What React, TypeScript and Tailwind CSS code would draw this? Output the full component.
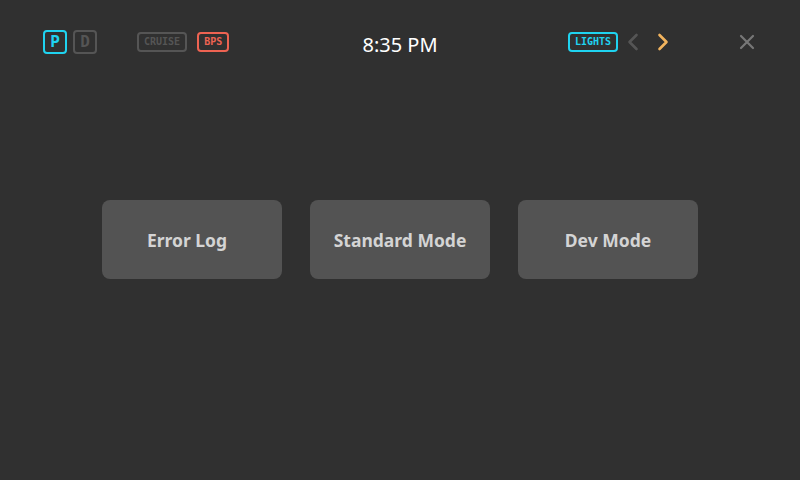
import React from 'react';

const Chevron = ({ dir, color }: { dir: 'left' | 'right'; color: string }) => (
  <svg width="12" height="20" viewBox="0 0 12 20" fill="none">
    <path
      d={dir === 'left' ? 'M9.5 3 L2.5 10 L9.5 17' : 'M2.5 3 L9.5 10 L2.5 17'}
      stroke={color}
      strokeWidth="2.6"
      strokeLinecap="round"
      strokeLinejoin="round"
    />
  </svg>
);

const Tag = ({ label, className }: { label: string; className: string }) => (
  <div
    className={`h-5 px-[5px] flex items-center rounded-[4px] border-2 text-[10px] font-bold font-['DejaVu_Sans_Mono',monospace] leading-none ${className}`}
  >
    {label}
  </div>
);

export default function App() {
  const buttons = [
    { label: 'Error Log', pad: 'pr-[10px]' },
    { label: 'Standard Mode', pad: '' },
    { label: 'Dev Mode', pad: '' },
  ];

  return (
    <div className="w-[800px] h-[480px] bg-[#303030] flex flex-col font-['Noto_Sans',sans-serif] overflow-hidden">
      <div className="relative h-[84px] flex items-center px-[43px]">
        <div className="flex items-center gap-[6px]">
          <div className="w-6 h-6 rounded-[4px] border-2 border-[#1fd3f0] text-[#1fd3f0] flex items-center justify-center text-[16px] font-bold font-['DejaVu_Sans_Mono',monospace]">
            P
          </div>
          <div className="w-6 h-6 rounded-[4px] border-2 border-[#555] text-[#555] flex items-center justify-center text-[16px] font-bold font-['DejaVu_Sans_Mono',monospace]">
            D
          </div>
        </div>
        <div className="flex items-center gap-[10px] ml-[40px]">
          <Tag label="CRUISE" className="border-[#555] text-[#555]" />
          <Tag label="BPS" className="border-[#ee6352] text-[#ee6352]" />
        </div>
        <div className="absolute left-0 right-0 top-[30px] text-center text-[20px] text-white leading-[30px] pointer-events-none">
          8:35 PM
        </div>
        <div className="ml-auto flex items-center">
          <Tag label="LIGHTS" className="border-[#1fd3f0] text-[#1fd3f0]" />
          <div className="ml-[9px]">
            <Chevron dir="left" color="#555" />
          </div>
          <div className="ml-[18px]">
            <Chevron dir="right" color="#f2b45e" />
          </div>
          <div className="ml-[70px] mr-[2px]">
            <svg width="16" height="16" viewBox="0 0 16 16">
              <path d="M2 2 L14 14 M14 2 L2 14" stroke="#777" strokeWidth="2.2" strokeLinecap="round" />
            </svg>
          </div>
        </div>
      </div>

      <div className="flex justify-center gap-[28px] mt-[116px]">
        {buttons.map((b) => (
          <button
            key={b.label}
            className={`w-[180px] h-[79px] pt-[2px] rounded-[8px] bg-[#535353] text-[#d4d4d4] text-[17.5px] font-bold ${b.pad}`}
          >
            {b.label}
          </button>
        ))}
      </div>
    </div>
  );
}
